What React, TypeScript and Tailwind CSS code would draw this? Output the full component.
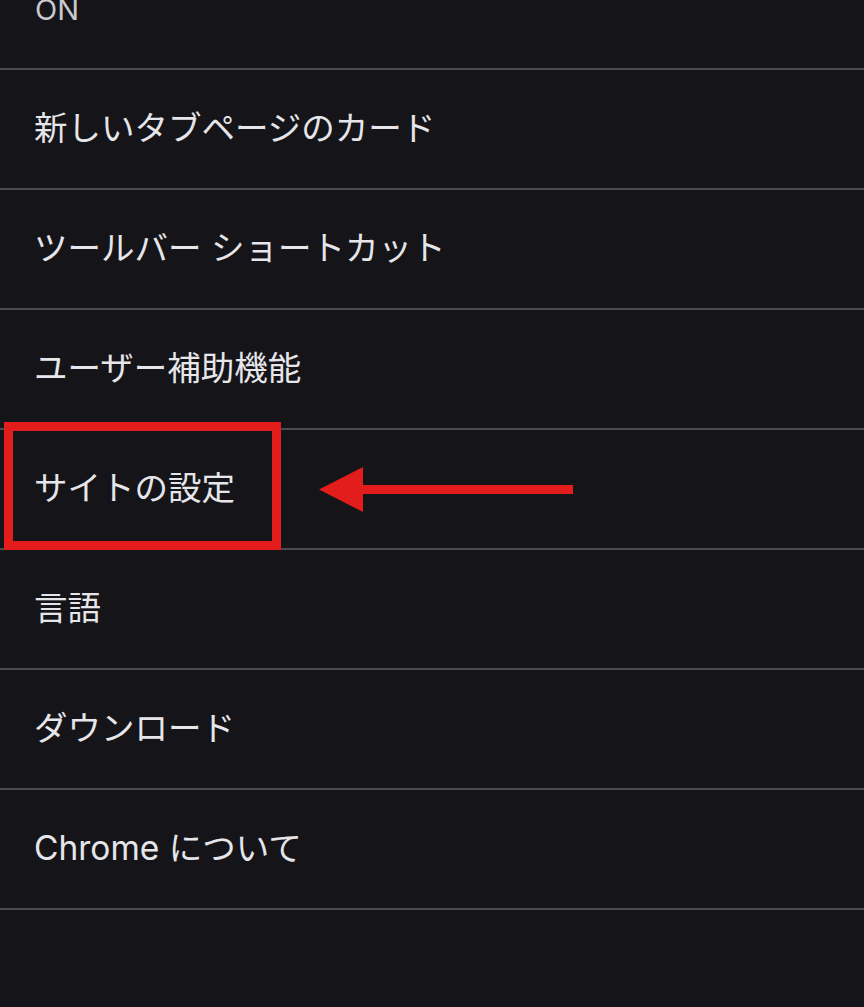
import React from 'react';

const items = [
  '新しいタブページのカード',
  'ツールバー ショートカット',
  'ユーザー補助機能',
  'サイトの設定',
  '言語',
  'ダウンロード',
  'Chrome について',
];

const font = { fontFamily: 'Inter, "Noto Sans CJK JP", sans-serif' };

const App: React.FC = () => {
  return (
    <div className="relative min-h-[1007px] w-[864px] overflow-hidden bg-[#151519]" style={font}>
      {/* cut-off row at the top */}
      <div className="h-[70px] overflow-hidden border-b-[2px] border-[#4a4a50] px-[35px]">
        <p className="-mt-[5px] text-[29px] leading-[30px] text-[#c9c9ce]">ON</p>
      </div>

      {items.map((label) => (
        <div
          key={label}
          className="flex h-[120px] items-center border-b-[2px] border-[#4a4a50] px-[34px]"
        >
          <span className="text-[33.5px] leading-none text-[#e6e6ea]">{label}</span>
        </div>
      ))}

      {/* highlight box */}
      <div className="absolute left-[4px] top-[422px] h-[128px] w-[277px] border-[9px] border-[#e31c1c]" />

      {/* arrow */}
      <svg className="absolute left-[318px] top-[466px]" width="256" height="47" viewBox="0 0 256 47">
        <polygon points="1,23.5 45,1 45,46" fill="#e31c1c" />
        <rect x="44" y="19" width="211" height="9" fill="#e31c1c" />
      </svg>
    </div>
  );
};

export default App;
